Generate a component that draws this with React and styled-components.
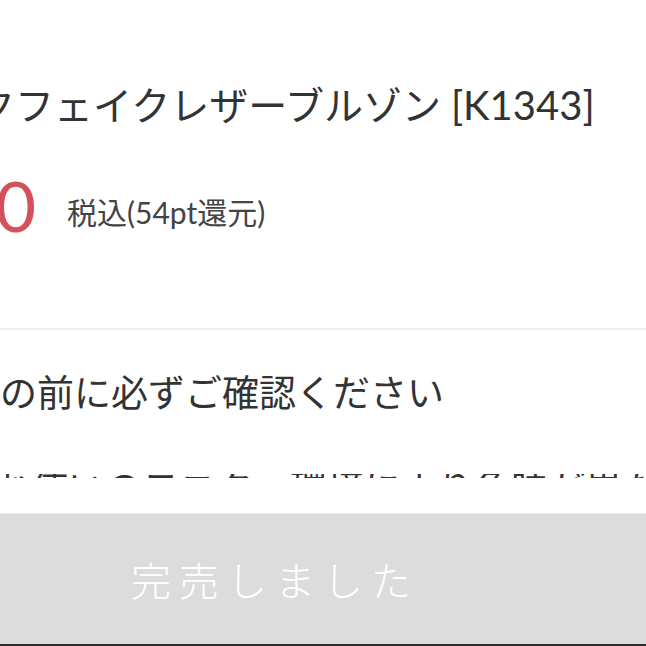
import styled, { createGlobalStyle } from "styled-components";

const GlobalStyle = createGlobalStyle`
  html, body {
    margin: 0;
    padding: 0;
    background: #fff;
  }
  body {
    font-family: Lato, "Noto Sans CJK JP", sans-serif;
    overflow: hidden;
  }
`;

const Screen = styled.div`
  width: 646px;
  height: 646px;
  overflow: hidden;
  display: flex;
  flex-direction: column;
`;

const Content = styled.div`
  flex: 1;
  padding-top: 78px;
`;

const Title = styled.h1`
  margin: 0 0 0 -24px;
  font-size: 39px;
  font-weight: 400;
  line-height: 54px;
  color: #333;
  white-space: nowrap;
`;

const Sku = styled.span`
  font-size: 40px;
`;

const PriceRow = styled.div`
  display: flex;
  align-items: center;
  gap: 31px;
  margin-top: 42px;
  height: 74px;
`;

const PriceBox = styled.div`
  width: 36px;
  margin-bottom: 12px;
  display: flex;
  justify-content: flex-end;
  flex-shrink: 0;
`;

const Price = styled.span`
  font-size: 70px;
  line-height: 1;
  color: #d4505a;
  white-space: nowrap;
`;

const Tax = styled.span`
  font-size: 30px;
  color: #444;
  white-space: nowrap;
`;

const Divider = styled.hr`
  margin: 80px 0 0;
  border: none;
  height: 2px;
  background: #efefef;
`;

const Notice = styled.p`
  margin: 36px 0 0 -111px;
  font-size: 37px;
  line-height: 54px;
  color: #333;
  white-space: nowrap;
`;

/* only the top sliver of the next line peeks out above the button */
const ClippedLine = styled.div`
  margin-top: 54px;
  height: 4px;
  overflow: hidden;
`;

const FadedText = styled.div`
  margin-left: -6px;
  transform: translateY(-13px);
  font-size: 37px;
  line-height: 54px;
  color: #333;
  white-space: nowrap;
`;

const SoldOut = styled.button`
  margin-left: -104px;
  width: calc(100% + 104px);
  height: 133px;
  flex-shrink: 0;
  display: flex;
  align-items: center;
  justify-content: center;
  padding: 0 0 0 8px;
  background: #dcdcdc;
  border: none;
  border-top: 1px solid #ececec;
  border-bottom: 2px solid #2b2b2b;
  color: #fff;
  font-family: Lato, "Noto Sans CJK JP", sans-serif;
  font-size: 40px;
  font-weight: 300;
  letter-spacing: 8px;
`;

export default function App() {
  return (
    <Screen>
      <GlobalStyle />
      <Content>
        <Title>
          クフェイクレザーブルゾン <Sku>[K1343]</Sku>
        </Title>
        <PriceRow>
          <PriceBox>
            <Price>¥5,400</Price>
          </PriceBox>
          <Tax>税込(54pt還元)</Tax>
        </PriceRow>
        <Divider />
        <Notice>ご購入の前に必ずご確認ください</Notice>
        <ClippedLine>
          <FadedText>お使いのモニター環境により色味が異なる場合がございます</FadedText>
        </ClippedLine>
      </Content>
      <SoldOut disabled>完売しました</SoldOut>
    </Screen>
  );
}
